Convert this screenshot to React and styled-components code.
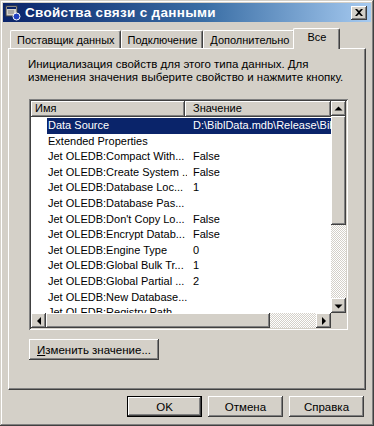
import React from "react";
import styled, { createGlobalStyle, css } from "styled-components";

const FACE = "#D4D0C8";
const SHADOW = "#808080";
const DARK = "#404040";

const GlobalStyle = createGlobalStyle`
  html, body { margin: 0; padding: 0; background: ${FACE}; }
  * { box-sizing: border-box; }
  body { font-family: "Liberation Sans", Arial, sans-serif; font-size: 11px; color: #000; }
`;

const raised = css`
  box-shadow: inset -1px -1px 0 ${DARK}, inset 1px 1px 0 #fff, inset -2px -2px 0 ${SHADOW}, inset 2px 2px 0 ${FACE};
`;

const Window = styled.div`
  width: 374px;
  height: 426px;
  background: ${FACE};
  padding: 3px;
  display: flex;
  flex-direction: column;
  box-shadow: inset -1px -1px 0 ${DARK}, inset 1px 1px 0 ${FACE}, inset -2px -2px 0 ${SHADOW}, inset 2px 2px 0 #fff;
`;

const TitleBar = styled.div`
  height: 19px;
  display: flex;
  align-items: center;
  padding: 0 4px 0 2px;
  background: linear-gradient(to right, #0a246a 0%, #3a6ea5 55%, #a6caf0 100%);
  color: #fff;
`;

const TitleText = styled.span`
  font-weight: bold;
  font-size: 13.5px;
  margin-left: 4px;
  flex: 1;
  white-space: nowrap;
  letter-spacing: 0.3px;
`;

const CloseButton = styled.div`
  width: 16px;
  height: 14px;
  background: ${FACE};
  display: flex;
  align-items: center;
  justify-content: center;
  ${raised};
`;

const Body = styled.div`
  flex: 1;
  display: flex;
  flex-direction: column;
  padding: 6px 6px 0 5px;
`;

const TabsRow = styled.div`
  display: flex;
  align-items: flex-end;
  height: 20px;
  padding-left: 2px;
  position: relative;
  z-index: 1;
`;

const Tab = styled.div`
  height: ${(p) => (p.$active ? "21px" : "18px")};
  margin: ${(p) => (p.$active ? "0 -2px -1px -2px" : "0")};
  padding: ${(p) => (p.$active ? "2px 13px 0 13px" : "3px 5px 0 6px")};
  background: ${FACE};
  border-top: 1px solid #fff;
  border-left: 1px solid #fff;
  border-right: 1px solid ${DARK};
  box-shadow: inset -1px 0 0 ${SHADOW};
  border-radius: 2px 2px 0 0;
  white-space: nowrap;
  font-size: 11px;
  position: relative;
  z-index: ${(p) => (p.$active ? 2 : 0)};
`;

const Panel = styled.div`
  width: 358px;
  height: 342px;
  border-top: 1px solid #fff;
  border-left: 1px solid #fff;
  border-right: 1px solid ${DARK};
  border-bottom: 1px solid ${DARK};
  box-shadow: inset -1px -1px 0 ${SHADOW};
  padding: 9px 0 0 19px;
  display: flex;
  flex-direction: column;
  align-items: flex-start;
`;

const Description = styled.p`
  margin: 0;
  font-size: 11.5px;
  line-height: 13px;
  width: 320px;
`;

const ListBox = styled.div`
  margin-top: 15px;
  margin-left: 1px;
  width: 319px;
  height: 231px;
  padding: 2px;
  background: #fff;
  box-shadow: inset 1px 1px 0 ${SHADOW}, inset -1px -1px 0 #fff, inset 2px 2px 0 ${DARK}, inset -2px -2px 0 ${FACE};
  display: grid;
  grid-template-columns: 300px 15px;
  grid-template-rows: 212px 15px;
`;

const ListContent = styled.div`
  overflow: hidden;
  display: flex;
  flex-direction: column;
`;

const Header = styled.div`
  display: grid;
  grid-template-columns: 154px 1fr;
  height: 16px;
  flex: none;
`;

const HeaderCell = styled.div`
  background: ${FACE};
  padding: 1px 0 0 ${(p) => p.$pad}px;
  white-space: nowrap;
  font-size: 11px;
  ${raised};
`;

const Rows = styled.div`
  padding-top: 1px;
`;

const Row = styled.div`
  display: grid;
  grid-template-columns: 16px 140px 158px;
  height: 15.6px;
  line-height: 15px;
  white-space: nowrap;
`;

const Cell = styled.div`
  overflow: hidden;
  padding-left: ${(p) => p.$pad}px;
  background: ${(p) => (p.$sel ? "#0a246a" : "transparent")};
  color: ${(p) => (p.$sel ? "#fff" : "#000")};
  font-size: 11px;
`;

const VScroll = styled.div`
  display: flex;
  flex-direction: column;
`;

const HScroll = styled.div`
  display: flex;
`;

const ArrowBtn = styled.div`
  width: 15px;
  height: 15px;
  flex: none;
  background: ${FACE};
  display: flex;
  align-items: center;
  justify-content: center;
  ${raised};
`;

const Thumb = styled.div`
  flex: none;
  background: ${FACE};
  width: ${(p) => (p.$vertical ? "15px" : `${p.$size}px`)};
  height: ${(p) => (p.$vertical ? `${p.$size}px` : "15px")};
  ${raised};
`;

const Track = styled.div`
  flex: 1;
  background: repeating-conic-gradient(#ffffff 0 25%, ${FACE} 0 50%) 0 0 / 2px 2px;
`;

const Corner = styled.div`
  background: ${FACE};
`;

const Button = styled.button`
  font-family: "Liberation Sans", Arial, sans-serif;
  font-size: 11.5px;
  font-weight: normal;
  color: #000;
  background: ${FACE};
  border: none;
  padding: 0;
  height: ${(p) => p.$h || 21}px;
  width: ${(p) => p.$w}px;
  ${raised};
  ${(p) =>
    p.$default &&
    css`
      box-shadow: inset 0 0 0 1px #000, inset -2px -2px 0 ${DARK}, inset 2px 2px 0 #fff, inset -3px -3px 0 ${SHADOW};
    `}
`;

const EditButton = styled(Button)`
  margin-top: 9px;
  margin-left: 1px;
  text-align: left;
  padding-left: 8px;
`;

const Footer = styled.div`
  display: flex;
  justify-content: flex-end;
  gap: 6px;
  padding: 6px 1px 0 0;
`;

const Underline = styled.span`
  text-decoration: underline;
`;

const Tri = ({ dir }) => {
  const pts = {
    up: "3.5,6.5 7.5,2.5 11.5,6.5",
    down: "3.5,3.5 7.5,7.5 11.5,3.5",
    left: "6,1 2,5 6,9",
    right: "2,1 6,5 2,9",
  }[dir];
  const vert = dir === "up" || dir === "down";
  return (
    <svg width={vert ? 15 : 8} height={10} viewBox={vert ? "0 0 15 10" : "0 0 8 10"}>
      <polygon points={pts} fill="#000" />
    </svg>
  );
};

const rows = [
  ["Data Source", "D:\\BiblData.mdb\\Release\\BiblData.mdb"],
  ["Extended Properties", ""],
  ["Jet OLEDB:Compact With...", "False"],
  ["Jet OLEDB:Create System ...", "False"],
  ["Jet OLEDB:Database Loc...", "1"],
  ["Jet OLEDB:Database Pas...", ""],
  ["Jet OLEDB:Don't Copy Lo...", "False"],
  ["Jet OLEDB:Encrypt Datab...", "False"],
  ["Jet OLEDB:Engine Type", "0"],
  ["Jet OLEDB:Global Bulk Tr...", "1"],
  ["Jet OLEDB:Global Partial ...", "2"],
  ["Jet OLEDB:New Database...", ""],
  ["Jet OLEDB:Registry Path", ""],
];

export default function App() {
  return (
    <>
      <GlobalStyle />
      <Window>
        <TitleBar>
          <svg width="16" height="16" viewBox="0 0 16 16">
            <rect x="1" y="1" width="11" height="10" fill="#d4d0c8" stroke="#404040" />
            <rect x="2" y="2" width="9" height="2" fill="#0a246a" />
            <line x1="3" y1="6" x2="9" y2="6" stroke="#808080" />
            <line x1="3" y1="8" x2="9" y2="8" stroke="#808080" />
            <circle cx="11.5" cy="11.5" r="3.5" fill="#2040c0" stroke="#fff" />
          </svg>
          <TitleText>Свойства связи с данными</TitleText>
          <CloseButton>
            <svg width="8" height="7" viewBox="0 0 8 7">
              <path d="M0 0h2l2 2 2-2h2L5 3.5 8 7H6L4 5 2 7H0l3-3.5z" fill="#000" />
            </svg>
          </CloseButton>
        </TitleBar>
        <Body>
          <TabsRow>
            <Tab>Поставщик данных</Tab>
            <Tab>Подключение</Tab>
            <Tab>Дополнительно</Tab>
            <Tab $active>Все</Tab>
          </TabsRow>
          <Panel>
            <Description>
              Инициализация свойств для этого типа данных. Для изменения значения выберите свойство и нажмите кнопку.
            </Description>
            <ListBox>
              <ListContent>
                <Header>
                  <HeaderCell $pad={4}>Имя</HeaderCell>
                  <HeaderCell $pad={8}>Значение</HeaderCell>
                </Header>
                <Rows>
                  {rows.map(([n, v], i) => (
                    <Row key={n}>
                      <Cell />
                      <Cell $pad={1} $sel={i === 0}>{n}</Cell>
                      <Cell $pad={6} $sel={i === 0}>{v}</Cell>
                    </Row>
                  ))}
                </Rows>
              </ListContent>
              <VScroll>
                <ArrowBtn><Tri dir="up" /></ArrowBtn>
                <Thumb $vertical $size={109} />
                <Track />
                <ArrowBtn><Tri dir="down" /></ArrowBtn>
              </VScroll>
              <HScroll>
                <ArrowBtn><Tri dir="left" /></ArrowBtn>
                <Thumb $size={224} />
                <Track />
                <ArrowBtn><Tri dir="right" /></ArrowBtn>
              </HScroll>
              <Corner />
            </ListBox>
            <EditButton $w={130}>
              <Underline>И</Underline>зменить значение...
            </EditButton>
          </Panel>
          <Footer>
            <Button $w={75} $default>OK</Button>
            <Button $w={75}>Отмена</Button>
            <Button $w={75}>Справка</Button>
          </Footer>
        </Body>
      </Window>
    </>
  );
}
